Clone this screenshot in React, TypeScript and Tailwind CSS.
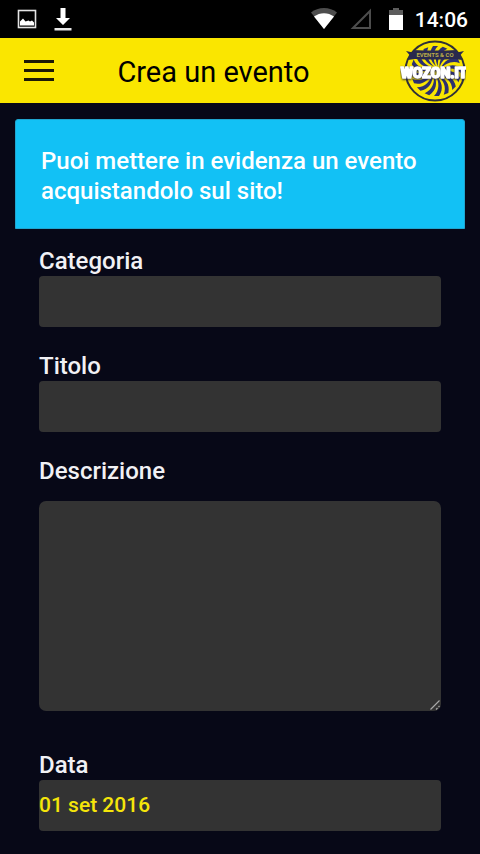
import type { ReactNode } from "react";

const blades = Array.from({ length: 16 }, (_, i) => i * 22.5);

function StatusBar() {
  return (
    <div className="flex h-[38px] items-center justify-between bg-black pl-[17px] pr-3">
      <div className="flex items-center gap-[17px]">
        <svg width="20" height="20" viewBox="0 0 20 20" fill="none">
          <rect x="1.5" y="1.5" width="17" height="17" stroke="#e4e4e4" strokeWidth="1.6" />
          <path d="M3 16.500V12.500l3-3 2.500 3 3-1 1.500 1 2-1 2 2v3z" fill="#fff" />
        </svg>
        <svg width="18" height="24" viewBox="0 0 18 24" fill="#fff">
          <path d="M6.500 1h5v10h4.500L9 18 2 11h4.500z" />
          <path d="M.5 21h17v2.500H.5z" fill="#e8e8e8" />
        </svg>
      </div>
      <div className="flex items-center">
        <svg width="26" height="22" viewBox="0 0 26 22">
          <path d="M0 4.500C7-1.500 19-1.500 26 4.500L13 21z" fill="#4d4d4d" />
          <path d="M3 8.500C9 4 17 4 23 8.500L13 21z" fill="#fff" />
        </svg>
        <svg className="ml-[13px]" width="22" height="22" viewBox="0 0 22 22" fill="none">
          <path d="M3 20 20 3v17z" stroke="#4d4d4d" strokeWidth="2" />
        </svg>
        <svg className="ml-[17px]" width="14" height="22" viewBox="0 0 14 22">
          <path d="M0 2h4V0h6v2h4v6H0z" fill="#5c5c5c" />
          <path d="M0 7h14v15H0z" fill="#fff" />
        </svg>
        <span className="ml-3 pt-px text-[21px] leading-6 font-medium text-white">14:06</span>
      </div>
    </div>
  );
}

function Logo() {
  return (
    <svg width="66" height="62" viewBox="0 0 66 62" role="img" aria-label="Wozon.it">
      <circle cx="35" cy="31" r="29.500" fill="#fae600" stroke="#303038" strokeWidth="2" />
      <g transform="translate(36 31)" fill="#2d3070">
        {blades.map((angle) => (
          <path
            key={angle}
            transform={`rotate(${angle})`}
            d="M5 0C10-6 18-8 25-3L25 2C19-4 11-3 5 0z"
          />
        ))}
      </g>
      <path
        d="M6 11 13 12.500V10Q35 11 57 10V12.500L64 11 60 15.500 62 20 55 19Q35 20 15 19L8 20 10 15.500z"
        fill="#29294d"
      />
      <text
        x="35"
        y="17"
        textAnchor="middle"
        fontSize="6"
        fontWeight="700"
        fill="#b9ad4a"
        className="font-[Roboto,sans-serif]"
      >
        EVENTS &amp; CO
      </text>
      <text
        x="34"
        y="38"
        textAnchor="middle"
        fontSize="14"
        fontWeight="900"
        fill="#fff"
        stroke="#fff"
        strokeWidth="1.600"
        strokeLinejoin="round"
        className="font-[Roboto,sans-serif] drop-shadow-[0_1px_1px_#22224a]"
      >
        WOZON.IT
      </text>
    </svg>
  );
}

function Header() {
  return (
    <header className="flex h-[65px] items-center bg-[#fae600] pl-6 pr-[14px]">
      <button type="button" aria-label="Menu" className="flex w-[30px] flex-col gap-[6px]">
        <span className="h-[3px] w-full bg-[#1c1a05]" />
        <span className="h-[3px] w-full bg-[#1c1a05]" />
        <span className="h-[3px] w-full bg-[#1c1a05]" />
      </button>
      <h1 className="flex-1 pt-[3px] pr-[27px] text-center text-[29px] leading-8 font-normal text-black">
        Crea un evento
      </h1>
      <Logo />
    </header>
  );
}

function Field({ id, label, children }: { id: string; label: string; children: ReactNode }) {
  return (
    <div className="flex flex-col">
      <label htmlFor={id} className="text-[24px] leading-[30px] font-medium text-[#f1f1f5]">
        {label}
      </label>
      {children}
    </div>
  );
}

const inputClass =
  "h-[51px] w-full rounded-[4px] bg-[#333333] pb-[2px] text-[21px] font-medium text-[#f5e50a] outline-none";

export default function App() {
  return (
    <div className="min-h-screen bg-[#070817] font-[Roboto,sans-serif]">
      <StatusBar />
      <Header />
      <main className="px-[15px] pt-4 pb-[22px]">
        <div className="rounded-t-[3px] border border-[#1fa5cf] bg-[#12c1f5] pt-[26px] pr-5 pb-[22px] pl-[25px] text-[24px] leading-[30px] font-medium text-white">
          Puoi mettere in evidenza un evento acquistandolo sul sito!
        </div>
        <form className="flex flex-col gap-6 px-6 pt-[17px]">
          <Field id="categoria" label="Categoria">
            <input id="categoria" type="text" className={inputClass} />
          </Field>
          <Field id="titolo" label="Titolo">
            <input id="titolo" type="text" className={inputClass} />
          </Field>
          <Field id="descrizione" label="Descrizione">
            <div className="relative my-[15px] flex">
              <textarea
                id="descrizione"
                className="h-[210px] w-full resize-none rounded-[7px] bg-[#333333] text-[21px] font-medium text-[#f5e50a] outline-none"
              />
              <svg
                className="pointer-events-none absolute right-0 bottom-0"
                width="12"
                height="12"
                viewBox="0 0 12 12"
                fill="none"
                stroke="#a8a8a8"
                strokeWidth="1.200"
              >
                <path d="M1.500 10.500 10.500 1.500M7 10.500l1.500-1.500M9.500 8l1-1" />
              </svg>
            </div>
          </Field>
          <Field id="data" label="Data">
            <input id="data" type="text" defaultValue="01 set 2016" className={inputClass} />
          </Field>
        </form>
      </main>
    </div>
  );
}
